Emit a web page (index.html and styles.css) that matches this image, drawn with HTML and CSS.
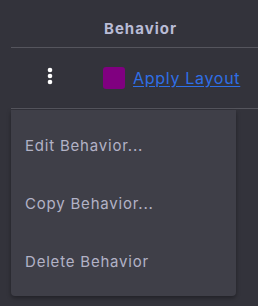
FILE: index.html
```html
<!DOCTYPE html>
<html>
<head>
<meta charset="utf-8">
<link rel="stylesheet" href="styles.css">
</head>
<body>
<div class="table">
  <div class="head-row">
    <div class="head-cell">Behavior</div>
  </div>
  <div class="row">
    <div class="dots-cell">
      <svg width="6" height="18" viewBox="0 0 6 18"><circle cx="3" cy="3" r="2.3" fill="#fff"/><circle cx="3" cy="9" r="2.3" fill="#fff"/><circle cx="3" cy="15" r="2.3" fill="#fff"/></svg>
    </div>
    <div class="behavior-cell">
      <span class="swatch"></span>
      <a class="link" href="#">Apply Layout</a>
    </div>
  </div>
</div>
<div class="menu">
  <div class="item">Edit Behavior...</div>
  <div class="item">Copy Behavior...</div>
  <div class="item">Delete Behavior</div>
</div>
</body>
</html>
```
FILE: styles.css
```css
html, body {
  margin: 0;
  padding: 0;
  background: #33333b;
  width: 258px;
  height: 306px;
  overflow: hidden;
  font-family: "Inter", "Noto Sans", sans-serif;
}
.table {
  margin-left: 11px;
}
.head-row {
  height: 48px;
  border-bottom: 1px solid #55555d;
  display: flex;
  align-items: center;
  box-sizing: border-box;
}
.head-cell {
  padding-left: 93px;
  font-weight: 700;
  font-size: 15px;
  letter-spacing: 1px;
  color: #b9bcd6;
  padding-top: 9px;
}
.row {
  height: 61px;
  border-bottom: 1px solid #55555d;
  box-sizing: border-box;
  display: flex;
  align-items: center;
}
.dots-cell {
  width: 78px;
  display: flex;
  justify-content: center;
  padding-bottom: 4px;
}
.behavior-cell {
  display: flex;
  align-items: center;
  padding-left: 14px;
}
.swatch {
  width: 22px;
  height: 22px;
  border-radius: 3px;
  background: #800080;
  margin-right: 8px;
}
.link {
  color: #2f6fe6;
  font-size: 16px;
  letter-spacing: 0.7px;
  text-decoration: underline;
  text-underline-offset: 2px;
}
.menu {
  position: absolute;
  left: 11px;
  top: 110px;
  width: 225px;
  height: 186px;
  box-sizing: border-box;
  padding-top: 6px;
  background: #3f3f48;
  border-radius: 0 0 4px 4px;
  box-shadow: 0 2px 4px rgba(0,0,0,0.35);
}
.item {
  height: 58px;
  display: flex;
  align-items: center;
  padding-left: 14px;
  font-size: 15px;
  letter-spacing: 0.8px;
  color: #b2b2c6;
}
```
